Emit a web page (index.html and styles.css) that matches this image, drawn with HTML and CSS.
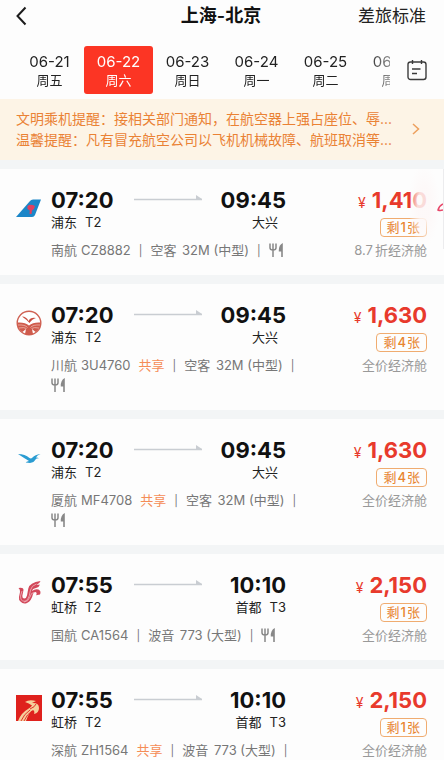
FILE: index.html
```html
<!DOCTYPE html>
<html lang="zh-CN">
<head>
    <meta charset="UTF-8">
    <title>上海-北京</title>
    <meta name="viewport" content="width=device-width, initial-scale=1.0">
    <link rel="stylesheet" href="styles.css">
</head>
<body>
    <!-- Símbolos reutilizados -->
    <svg class="symbols" aria-hidden="true">
        <symbol id="arrow" viewBox="0 0 68 8" preserveAspectRatio="none">
            <path d="M0 5h68L62 1v4" fill="#c9cdd2"/>
            <path d="M0 5.5h68" stroke="#c9cdd2" stroke-width="1.4"/>
        </symbol>
        <symbol id="meal" viewBox="0 0 15 14">
            <path d="M1 .5v4.2q0 2.3 3 2.3t3-2.3V.5M4 .5V14" fill="none" stroke="#888" stroke-width="1.5"/>
            <path d="M13.8 0v14h-1.6V8.5H9.8q-.3-6.5 4-8.5z" fill="#888"/>
        </symbol>
    </svg>

    <header class="top-bar">
        <button class="back-button" aria-label="返回">
            <svg width="11" height="20" viewBox="0 0 11 20"><path d="M9.500 1.500L1.500 10l8 8.500" fill="none" stroke="#1c1c1c" stroke-width="2"/></svg>
        </button>
        <h1>上海-北京</h1>
        <a href="#" class="standard-link">差旅标准</a>
    </header>

    <div class="date-bar">
        <nav class="dates">
            <a href="#" class="date">06-21<span>周五</span></a>
            <a href="#" class="date active">06-22<span>周六</span></a>
            <a href="#" class="date">06-23<span>周日</span></a>
            <a href="#" class="date">06-24<span>周一</span></a>
            <a href="#" class="date">06-25<span>周二</span></a>
            <a href="#" class="date">06-26<span>周三</span></a>
        </nav>
        <button class="calendar-button" aria-label="日历">
            <svg width="20" height="22" viewBox="0 0 20 22" fill="none" stroke="#3c3c3c" stroke-width="1.400">
                <rect x="1" y="3" width="18" height="17.500" rx="2.500"/>
                <path d="M5.500 1v4M14.500 1v4M5 10h8.500M5 14.500h5"/>
            </svg>
        </button>
    </div>

    <a href="#" class="notice">
        <span class="notice-text">
            <span>文明乘机提醒：接相关部门通知，在航空器上强占座位、辱...</span>
            <span>温馨提醒：凡有冒充航空公司以飞机机械故障、航班取消等...</span>
        </span>
        <svg width="8" height="12" viewBox="0 0 8 12"><path d="M1 1l5.500 5L1 11" fill="none" stroke="#eda05e" stroke-width="1.500"/></svg>
    </a>

    <main class="flights">
        <article class="flight">
            <svg class="airline-logo" viewBox="0 0 26 26">
                <path d="M0 22L14 6q1-1.500 3-1.500h8L19 20q-.8 2-3 2z" fill="#1b86c8"/>
                <path d="M11.500 11q3-2.500 7.500 0l-1 3-2 1.500-.5 3.500h-2l.3-3.500-2.300-1.500z" fill="#e0405f"/>
            </svg>
            <div class="flight-info">
                <div class="route">
                    <div><time>07:20</time><p class="airport"><span>浦东</span><span>T2</span></p></div>
                    <svg class="arrow"><use href="#arrow"/></svg>
                    <div class="arrival"><time>09:45</time><p class="airport"><span>大兴</span><span></span></p></div>
                </div>
                <p class="details"><span class="airline">南航</span>CZ8882<i>|</i><span class="plane">空客</span> 32M (中型)<i>|</i><svg class="meal"><use href="#meal"/></svg></p>
            </div>
            <div class="fare">
                <p class="price"><small>¥</small>1,410</p>
                <span class="seats">剩<b>1</b>张</span>
                <p class="cabin"><span class="discount">8.7</span>折经济舱</p>
            </div>
            <div class="floating-tab"><svg width="6" height="10" viewBox="0 0 6 10"><path d="M6 1Q2 3 1 7q2 1 5 0" fill="none" stroke="#e8486a" stroke-width="1.500"/></svg></div>
        </article>

        <article class="flight">
            <svg class="airline-logo" viewBox="0 0 26 26">
                <circle cx="13" cy="13" r="11.800" fill="#fff" stroke="#cf6153" stroke-width="1.400"/>
                <path d="M6 6.500q4.500 0 6.500 4.500 2-4 7.500-3-4 1-6.500 5Q11 10 6 6.500z" fill="#c94d3f"/>
                <path d="M1.500 12.500Q9 12 13 15.500q4-3.500 11.500-3 .5 6-5 9.500l-3.500-3 1 5q-4 1.500-8 0l1-5-3.500 3Q1 18.500 1.500 12.500z" fill="#cf5b4c"/>
                <path d="M2 15q7-.5 9.500 2.500M3 18q5-1 7.500.5M24 15q-7-.5-9.500 2.500M23 18q-5-1-7.500.5" fill="none" stroke="#f3c5bd" stroke-width=".7"/>
            </svg>
            <div class="flight-info">
                <div class="route">
                    <div><time>07:20</time><p class="airport"><span>浦东</span><span>T2</span></p></div>
                    <svg class="arrow"><use href="#arrow"/></svg>
                    <div class="arrival"><time>09:45</time><p class="airport"><span>大兴</span><span></span></p></div>
                </div>
                <p class="details"><span class="airline">川航</span>3U4760<em>共享</em><i>|</i><span class="plane">空客</span> 32M (中型)<i>|</i> <svg class="meal"><use href="#meal"/></svg></p>
            </div>
            <div class="fare">
                <p class="price"><small>¥</small>1,630</p>
                <span class="seats">剩<b>4</b>张</span>
                <p class="cabin">全价经济舱</p>
            </div>
        </article>

        <article class="flight">
            <svg class="airline-logo" viewBox="0 0 26 26">
                <path d="M2 9q7 0 11.500 4 1.500 1 3-.5Q19 9.500 24.500 9q-3.500 1-4.500 3.500 1.500-.3 3 .8-2.500-.2-3.500 1.200-1.500 3-5.500 3.500l-4-.5q-1-.5 3-1.500Q8 13 2 9z" fill="#2a9cd2"/>
            </svg>
            <div class="flight-info">
                <div class="route">
                    <div><time>07:20</time><p class="airport"><span>浦东</span><span>T2</span></p></div>
                    <svg class="arrow"><use href="#arrow"/></svg>
                    <div class="arrival"><time>09:45</time><p class="airport"><span>大兴</span><span></span></p></div>
                </div>
                <p class="details"><span class="airline">厦航</span>MF4708<em>共享</em><i>|</i><span class="plane">空客</span> 32M (中型)<i>|</i> <svg class="meal"><use href="#meal"/></svg></p>
            </div>
            <div class="fare">
                <p class="price"><small>¥</small>1,630</p>
                <span class="seats">剩<b>4</b>张</span>
                <p class="cabin">全价经济舱</p>
            </div>
        </article>

        <article class="flight">
            <svg class="airline-logo" viewBox="0 0 26 26">
                <path d="M2.500 8Q7.500 7 7.500 10l-1.200 6q0 2.500 2 2.500t2.700-3l1.300-7q1.200-6 12.200-7.500-1 3-4 3.700 2 .3 3.500-.2-1 3-4 3.500-3.500.5-4 3 3-2.500 6.500-1.500 3 1.500 1.500 5l-4 .8q1.500-2.500-.5-3.300-2 0-2.500 2-1.500 7-6 9-4 1.500-6.500-1.500Q2.500 20 3 17l1-5q.3-2.500-1.500-4z" fill="#d2485a"/>
                <path d="M6 11q-2.500 6-1 8.500 3 3.500 6.500 0 2-2.500 3-9.500 1-4.500 6-6M8 22q4 0 6-5 1-4.500 4-4.500" fill="none" stroke="#f2b5bc" stroke-width=".8"/>
            </svg>
            <div class="flight-info">
                <div class="route">
                    <div><time>07:55</time><p class="airport"><span>虹桥</span><span>T2</span></p></div>
                    <svg class="arrow"><use href="#arrow"/></svg>
                    <div class="arrival"><time>10:10</time><p class="airport"><span>首都</span><span>T3</span></p></div>
                </div>
                <p class="details"><span class="airline">国航</span>CA1564<i>|</i><span class="plane">波音</span> 773 (大型)<i>|</i><svg class="meal"><use href="#meal"/></svg></p>
            </div>
            <div class="fare">
                <p class="price"><small>¥</small>2,150</p>
                <span class="seats">剩<b>1</b>张</span>
                <p class="cabin">全价经济舱</p>
            </div>
        </article>

        <article class="flight">
            <svg class="airline-logo" viewBox="0 0 26 26">
                <path d="M0 0h26v26H0z" fill="#df211d"/>
                <path d="M9 7q4-3 11-1l-4 2q7-.5 7 5 0 5-5 6 1-3-1-4-4 2-7 11H2q3-8 10-12 3-2 4-3.500Q13 8 9 7z" fill="#f5cf9c"/>
                <path d="M5 26q3-7 9-11M8 26q3-7 8-10M14 14q5-2 6-5" fill="none" stroke="#df211d" stroke-width=".9"/>
            </svg>
            <div class="flight-info">
                <div class="route">
                    <div><time>07:55</time><p class="airport"><span>虹桥</span><span>T2</span></p></div>
                    <svg class="arrow"><use href="#arrow"/></svg>
                    <div class="arrival"><time>10:10</time><p class="airport"><span>首都</span><span>T3</span></p></div>
                </div>
                <p class="details"><span class="airline">深航</span>ZH1564<em>共享</em><i>|</i><span class="plane">波音</span> 773 (大型)<i>|</i> <svg class="meal"><use href="#meal"/></svg></p>
            </div>
            <div class="fare">
                <p class="price"><small>¥</small>2,150</p>
                <span class="seats">剩<b>1</b>张</span>
                <p class="cabin">全价经济舱</p>
            </div>
        </article>
    </main>
</body>
</html>
```
FILE: styles.css
```css
* {
    box-sizing: border-box;
}
html {
    scrollbar-width: none;
}
body {
    margin: 0;
    font-family: Inter, "Noto Sans CJK SC", sans-serif;
    font-size: 13px;
    background-color: #fdfdfd;
    color: #222;
}
p, h1 {
    margin: 0;
}
a {
    color: inherit;
    text-decoration: none;
}
button {
    border: none;
    padding: 0;
    background: none;
    cursor: pointer;
}
.symbols {
    display: none;
}
.top-bar {
    display: grid;
    grid-template-columns: 1fr auto 1fr;
    align-items: center;
    height: 36px;
    padding: 0 18px 4px 16px;
}
.back-button {
    display: flex;
    justify-self: start;
}
.top-bar h1 {
    font-size: 18px;
    line-height: 32px;
    font-weight: 600;
    color: #111;
}
.standard-link {
    justify-self: end;
    font-size: 17px;
    line-height: 32px;
}
/* Faixa de datas */
.date-bar {
    display: flex;
    height: 63px;
}
.dates {
    flex: 1;
    min-width: 0;
    display: flex;
    align-items: center;
    overflow: hidden;
    padding: 4px 0 0 15px;
    -webkit-mask-image: linear-gradient(to left, rgba(0, 0, 0, 0.5), #000 24px);
    mask-image: linear-gradient(to left, rgba(0, 0, 0, 0.5), #000 24px);
}
.date {
    flex: 0 0 69px;
    padding: 6px 0 5px;
    border-radius: 3px;
    text-align: center;
    font-size: 15px;
    line-height: 20px;
}
.date span {
    display: block;
    font-size: 13px;
    line-height: 17px;
}
.date.active {
    background-color: #fc3524;
    color: #fff;
}
.calendar-button {
    flex: 0 0 54px;
    display: flex;
    justify-content: center;
    align-items: center;
    padding-top: 4px;
}
.notice {
    display: flex;
    justify-content: space-between;
    align-items: center;
    padding: 9px 24px 10px 16px;
    background-color: #fdf4e6;
    color: #ea8235;
    font-size: 14px;
    line-height: 21px;
}
.notice-text {
    min-width: 0;
}
.notice-text span {
    display: block;
    white-space: nowrap;
}
/* Lista de voos */
.flights {
    display: flex;
    flex-direction: column;
    gap: 9px;
    padding-top: 9px;
    background-color: #f3f5f6;
}
.flight {
    position: relative;
    display: flex;
    padding: 18px 17px 15px 16px;
    background-color: #fdfdfd;
}
.airline-logo {
    flex: 0 0 26px;
    height: 26px;
    margin: 8px 9px 0 0;
}
.flight-info {
    flex: 1;
    min-width: 0;
}
.route {
    display: grid;
    grid-template-columns: 83px 68px 1fr;
    max-width: 235px;
}
.route time {
    display: block;
    font-size: 22px;
    line-height: 26px;
    font-weight: 700;
    color: #111;
}
.arrow {
    width: 68px;
    height: 8px;
    margin-top: 7px;
}
.arrival {
    text-align: right;
}
.airport {
    display: flex;
    gap: 8px;
    line-height: 18px;
}
.arrival .airport {
    justify-content: flex-end;
}
.details {
    margin-top: 9px;
    line-height: 20px;
    color: #777;
}
.details i {
    margin: 0 8px;
    font-size: 11px;
    line-height: 11px;
    font-style: normal;
}
.details em {
    margin-left: 8px;
    font-style: normal;
    color: #f58d57;
}
.airline {
    margin-right: 4px;
}
.plane {
    margin-right: 2px;
}
.meal {
    width: 15px;
    height: 14px;
    vertical-align: -2px;
}
.fare {
    flex: 0 0 118px;
    display: flex;
    flex-direction: column;
    align-items: flex-end;
}
.price {
    font-size: 22px;
    line-height: 26px;
    font-weight: 700;
    color: #e83a2c;
}
.price small {
    margin-right: 6px;
    font-size: 14px;
    line-height: 14px;
    font-weight: 400;
}
.seats {
    margin-top: 5px;
    padding: 0 6px;
    border: 1px solid #f0ac70;
    border-radius: 4px;
    line-height: 17px;
    color: #e8842f;
}
.seats b {
    margin: 0 1px;
    font-weight: 500;
}
.cabin {
    margin-top: 4px;
    line-height: 18px;
    color: #999;
}
.discount {
    margin-right: 2px;
}
/* Aba flutuante na borda direita */
.floating-tab {
    position: absolute;
    top: 0;
    right: 0;
    width: 34px;
    height: 80px;
    display: flex;
    justify-content: flex-end;
    padding-top: 34px;
    border-right: 1px solid #ececee;
    background: radial-gradient(ellipse 16px 42px at 14px 36px, rgba(253, 248, 248, 0.85) 40%, rgba(253, 253, 253, 0));
}
```
